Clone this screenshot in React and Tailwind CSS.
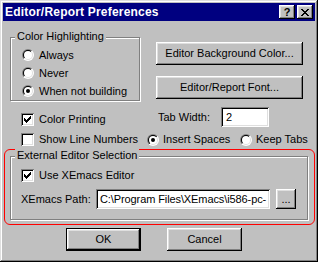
import React from "react";

const raised =
  "bg-[#c0c0c0] shadow-[inset_-1px_-1px_0_#000,inset_1px_1px_0_#fff,inset_-2px_-2px_0_#808080,inset_2px_2px_0_#dfdfdf]";
const sunken =
  "bg-white shadow-[inset_1px_1px_0_#808080,inset_-1px_-1px_0_#fff,inset_2px_2px_0_#000,inset_-2px_-2px_0_#dfdfdf]";

function Check({ checked }) {
  const tops = [2, 3, 4, 3, 2, 1, 0];
  return (
    <div className={`w-[13px] h-[13px] shrink-0 ${sunken}`}>
      {checked && (
        <svg width="13" height="13" shapeRendering="crispEdges">
          {tops.map((t, i) => (
            <rect key={i} x={3 + i} y={3 + t} width="1" height="3" fill="#000" />
          ))}
        </svg>
      )}
    </div>
  );
}

function Radio({ checked }) {
  return (
    <div className="w-[12px] h-[12px] shrink-0 rounded-full p-[1px] bg-[linear-gradient(135deg,#808080_50%,#fff_50%)]">
      <div className="w-full h-full rounded-full p-[1px] bg-[linear-gradient(135deg,#000_50%,#dfdfdf_50%)]">
        <div className="w-full h-full rounded-full bg-white flex items-center justify-center">
          {checked && <div className="w-[4px] h-[4px] rounded-full bg-black" />}
        </div>
      </div>
    </div>
  );
}

function GroupBox({ label, className, children }) {
  return (
    <div
      className={`relative border border-[#808080] shadow-[inset_1px_1px_0_#fff,1px_1px_0_#fff] ${className}`}
    >
      <span className="absolute left-[4px] top-[-8px] px-[2px] bg-[#c0c0c0] whitespace-nowrap">
        {label}
      </span>
      {children}
    </div>
  );
}

function Button({ children, className = "" }) {
  return (
    <div className={`flex items-center justify-center ${raised} ${className}`}>
      {children}
    </div>
  );
}

function CloseGlyph() {
  const rows = [
    [0, 1, 6, 7],
    [1, 2, 5, 6],
    [2, 3, 4, 5],
    [3, 4],
    [2, 3, 4, 5],
    [1, 2, 5, 6],
    [0, 1, 6, 7],
  ];
  return (
    <svg width="8" height="7" shapeRendering="crispEdges">
      {rows.map((cols, y) =>
        cols.map((x) => <rect key={`${x}-${y}`} x={x} y={y} width="1" height="1" fill="#000" />)
      )}
    </svg>
  );
}

export default function App() {
  return (
    <div className="w-[318px] h-[262px] bg-[#c0c0c0] flex flex-col text-[11px] leading-[13px] text-black font-['Liberation_Sans',Arial,sans-serif] shadow-[inset_-1px_-1px_0_#000,inset_1px_1px_0_#dfdfdf,inset_-2px_-2px_0_#808080,inset_2px_2px_0_#fff]">
      {/* title bar */}
      <div className="mx-[3px] mt-[3px] h-[18px] bg-[#000080] flex items-center justify-between pl-[2px] pr-[2px]">
        <span className="text-white font-bold text-[12px] tracking-[0.2px]">Editor/Report Preferences</span>
        <div className="flex gap-[2px]">
          <Button className="w-[16px] h-[14px] font-bold leading-none">?</Button>
          <Button className="w-[16px] h-[14px]">
            <CloseGlyph />
          </Button>
        </div>
      </div>

      {/* highlighting + buttons */}
      <div className="flex mt-[16px] ml-[10px]">
        <GroupBox label="Color Highlighting" className="w-[130px] h-[64px] pt-[8px] pl-[11px]">
          {[
            ["Always", false],
            ["Never", false],
            ["When not building", true],
          ].map(([label, on]) => (
            <div key={label} className="h-[18px] flex items-center gap-[5px]">
              <Radio checked={on} />
              <span>{label}</span>
            </div>
          ))}
        </GroupBox>
        <div className="ml-[16px] pt-[5px] flex flex-col gap-[11px]">
          <Button className="w-[147px] h-[23px]">Editor Background Color...</Button>
          <Button className="w-[147px] h-[23px]">Editor/Report Font...</Button>
        </div>
      </div>

      {/* color printing / tab width */}
      <div className="flex items-start mt-[6px] h-[20px]">
        <div className="w-[158px] pl-[21px] mt-[6px] flex items-center gap-[5px]">
          <Check checked />
          <span>Color Printing</span>
        </div>
        <span className="w-[63px] mt-[4px]">Tab Width:</span>
        <div className={`w-[48px] h-[20px] pl-[5px] flex items-center ${sunken}`}>2</div>
      </div>

      {/* line numbers / spaces */}
      <div className="flex items-center mt-[6px] h-[13px]">
        <div className="w-[147px] pl-[21px] flex items-center gap-[5px]">
          <Check />
          <span>Show Line Numbers</span>
        </div>
        <div className="w-[93px] flex items-center gap-[4px]">
          <Radio checked />
          <span>Insert Spaces</span>
        </div>
        <div className="flex items-center gap-[4px]">
          <Radio />
          <span>Keep Tabs</span>
        </div>
      </div>

      {/* external editor, circled in red */}
      <div className="ml-[4px] mt-[3px] w-[311px] h-[76px] border border-[#ff0000] rounded-[6px] pt-[6px] pl-[5px]">
        <GroupBox label="External Editor Selection" className="w-[298px] h-[64px] pl-[10px]">
          <div className="mt-[12px] flex items-center gap-[5px]">
            <Check checked />
            <span>Use XEmacs Editor</span>
          </div>
          <div className="mt-[7px] flex items-center">
            <span className="w-[75px]">XEmacs Path:</span>
            <div
              className={`w-[174px] h-[20px] pl-[4px] pr-[2px] flex items-center overflow-hidden whitespace-nowrap ${sunken}`}
            >
              <span className="tracking-[-0.1px]">C:\Program Files\XEmacs\i586-pc-</span>
            </div>
            <Button className="ml-[6px] w-[20px] h-[20px]">...</Button>
          </div>
        </GroupBox>
      </div>

      {/* OK / Cancel */}
      <div className="flex mt-[3px] ml-[66px]">
        <div className="w-[75px] h-[23px] border border-black">
          <Button className="w-full h-full">OK</Button>
        </div>
        <Button className="ml-[26px] w-[75px] h-[23px]">Cancel</Button>
      </div>
    </div>
  );
}
